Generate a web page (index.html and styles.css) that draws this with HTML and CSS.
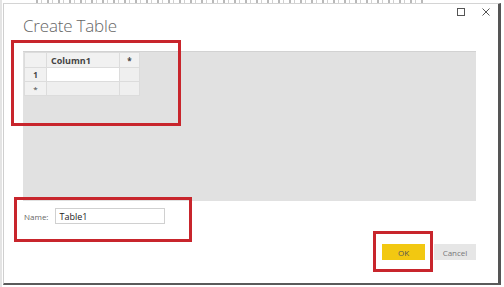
FILE: index.html
```html
<!DOCTYPE html>
<html lang="en">
<head>
  <meta charset="UTF-8">
  <title>Create Table</title>
  <link rel="stylesheet" href="styles.css">
</head>
<body>
  <div class="screen">
    <div class="page-strip"></div>
    <div class="dialog">
      <div class="dialog-header">
        <h1>Create Table</h1>
        <div class="window-controls">
          <svg width="8" height="8" viewBox="0 0 8 8"><rect x="0.5" y="0.5" width="7" height="7" fill="none" stroke="#555" stroke-width="1"/></svg>
          <svg width="8" height="8" viewBox="0 0 8 8"><path d="M0.5 0.5 L7.5 7.5 M7.5 0.5 L0.5 7.5" stroke="#555" stroke-width="1"/></svg>
        </div>
      </div>
      <div class="grid-area">
        <table class="grid">
          <tr>
            <th class="corner"></th>
            <th class="col-head">Column1</th>
            <th class="add-col">*</th>
          </tr>
          <tr>
            <th class="row-head">1</th>
            <td class="cell"></td>
            <td class="empty"></td>
          </tr>
          <tr>
            <th class="row-head new">*</th>
            <td class="empty"></td>
            <td class="empty"></td>
          </tr>
        </table>
      </div>
      <div class="name-row">
        <label for="table-name">Name:</label>
        <input type="text" id="table-name" value="Table1">
      </div>
      <div class="buttons">
        <button class="ok">OK</button>
        <button class="cancel">Cancel</button>
      </div>
    </div>
    <div class="callout callout-grid"></div>
    <div class="callout callout-name"></div>
    <div class="callout callout-ok"></div>
  </div>
</body>
</html>
```

FILE: styles.css
```css
* {
  margin: 0;
  padding: 0;
  box-sizing: border-box;
}
body {
  background: #fff;
  font-family: "Open Sans", "Segoe UI", sans-serif;
}
.screen {
  position: relative;
  width: 504px;
  height: 287px;
  overflow: hidden;
  border-left: 2px solid #e4e4e4;
}
/* bottom edge of the page text behind the dialog */
.page-strip {
  height: 3px;
  margin: 0 80px 0 34px;
  background: repeating-linear-gradient(90deg, #8a8a8a 0 2px, transparent 2px 5px, #b0b0b0 5px 6px, transparent 6px 11px);
  opacity: 0.6;
}
.dialog {
  margin-left: 1px;
  width: 498px;
  height: 282px;
  background: #fff;
  border-top: 1px solid #d4d4d4;
  border-left: 1px solid #cfcfcf;
  border-right: 3px solid #555;
  border-bottom: 2px solid #5a5a5a;
  padding: 0 22px 0 19px;
  display: flex;
  flex-direction: column;
}
.dialog-header {
  height: 47px;
  display: flex;
  justify-content: space-between;
  align-items: flex-start;
  margin-right: -14px;
}
.dialog-header h1 {
  font-weight: 300;
  font-size: 17px;
  color: #666;
  margin-top: 10px;
  letter-spacing: -0.2px;
}
.window-controls {
  display: flex;
  gap: 17px;
  margin-top: 4px;
}
.grid-area {
  height: 150px;
  background: #e1e1e1;
  border-top: 1px solid #d2d2d2;
  padding-left: 1px;
}
.grid {
  border-collapse: collapse;
  font-size: 8px;
  font-weight: 700;
  color: #444;
}
.grid th,
.grid td {
  border: 1px solid #dcdcdc;
  height: 14px;
  padding: 0 4px;
  text-align: left;
  background: #f1f1f1;
}
.grid tr:first-child th {
  height: 15px;
}
.grid .corner {
  width: 22px;
}
.grid .col-head {
  width: 73px;
  font-size: 9px;
}
.grid .add-col {
  width: 20px;
  text-align: center;
}
.grid .row-head {
  text-align: center;
}
.grid .new {
  font-weight: 400;
}
.grid .cell {
  background: #fff;
}
.grid .empty {
  background: #efefef;
}
.name-row {
  margin-top: 7px;
  height: 16px;
  display: flex;
  align-items: center;
  gap: 7px;
  padding-left: 1px;
}
.name-row label {
  font-size: 8px;
  color: #666;
}
.name-row input {
  width: 110px;
  height: 16px;
  border: 1px solid #d0d0d0;
  padding: 0 3px;
  font-family: inherit;
  font-size: 9px;
  color: #222;
}
.buttons {
  margin-top: 20px;
  display: flex;
  justify-content: flex-end;
  gap: 9px;
}
.buttons button {
  width: 43px;
  height: 16px;
  border: none;
  font-family: inherit;
  font-size: 8px;
  color: #555;
}
.buttons .ok {
  background: #f2c811;
}
.buttons .cancel {
  width: 42px;
  background: #e6e6e6;
  color: #777;
}
.callout {
  position: absolute;
  border: 3px solid #c8252c;
}
.callout-grid {
  left: 9px;
  top: 40px;
  width: 170px;
  height: 86px;
}
.callout-name {
  left: 12px;
  top: 197px;
  width: 178px;
  height: 45px;
}
.callout-ok {
  left: 371px;
  top: 231px;
  width: 60px;
  height: 41px;
}
```
